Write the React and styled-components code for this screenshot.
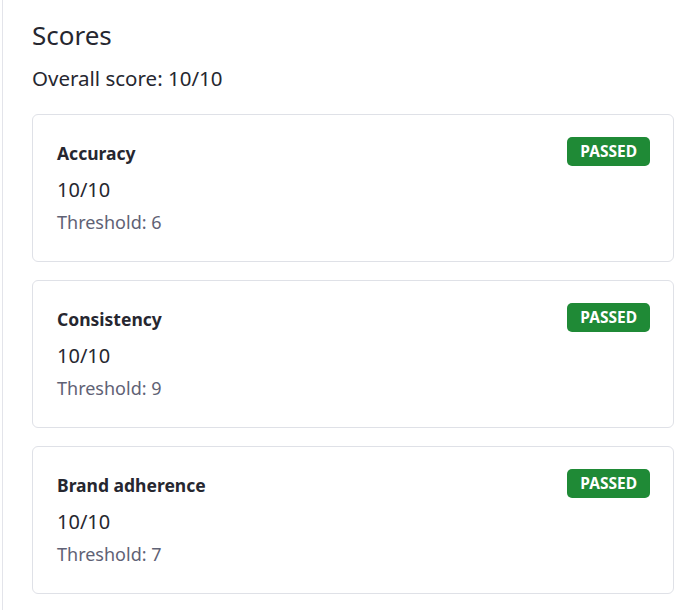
import React from 'react';
import styled, { createGlobalStyle } from 'styled-components';

const scores = [
  { name: 'Accuracy', score: 10, max: 10, threshold: 6 },
  { name: 'Consistency', score: 10, max: 10, threshold: 9 },
  { name: 'Brand adherence', score: 10, max: 10, threshold: 7 },
];

const GlobalStyle = createGlobalStyle`
  html, body {
    margin: 0;
    padding: 0;
    background: #fff;
  }
  body {
    font-family: "Noto Sans", Lato, sans-serif;
    color: #262730;
  }
`;

const Panel = styled.section`
  margin-left: 2px;
  border-left: 1px solid #e3e4ea;
  padding: 17px 26px 16px 29px;
  min-height: 610px;
  box-sizing: border-box;
`;

const Heading = styled.h2`
  margin: 0;
  font-size: 26px;
  font-weight: 400;
  line-height: 36px;
`;

const Overall = styled.p`
  margin: 11px 0 0;
  font-size: 20.5px;
  line-height: 28px;
`;

const List = styled.div`
  display: flex;
  flex-direction: column;
  gap: 18px;
  margin-top: 22px;
`;

const Card = styled.div`
  border: 1px solid #dfe1e7;
  border-radius: 6px;
  padding: 23px 23px 23px 24px;
  display: flex;
  justify-content: space-between;
  align-items: flex-start;
  height: 148px;
  box-sizing: border-box;
`;

const Info = styled.div`
  display: flex;
  flex-direction: column;
  padding-top: 3px;
`;

const Name = styled.div`
  font-size: 17.5px;
  font-weight: 700;
  line-height: 24px;
`;

const Value = styled.div`
  margin-top: 11px;
  font-size: 20px;
  line-height: 28px;
`;

const Threshold = styled.div`
  margin-top: 6px;
  font-size: 18px;
  line-height: 24px;
  color: #5f6275;
`;

const Badge = styled.span`
  flex-shrink: 0;
  margin-top: -1px;
  background: ${(p) => (p.$passed ? '#1f8a36' : '#c9302c')};
  color: #fff;
  font-size: 15.5px;
  font-weight: 700;
  border-radius: 5px;
  height: 29px;
  line-height: 29px;
  padding: 0 13px;
`;

export default function App() {
  return (
    <>
      <GlobalStyle />
      <Panel>
        <Heading>Scores</Heading>
        <Overall>Overall score: 10/10</Overall>
        <List>
          {scores.map((s) => (
            <Card key={s.name}>
              <Info>
                <Name>{s.name}</Name>
                <Value>
                  {s.score}/{s.max}
                </Value>
                <Threshold>Threshold: {s.threshold}</Threshold>
              </Info>
              <Badge $passed={s.score >= s.threshold}>
                {s.score >= s.threshold ? 'PASSED' : 'FAILED'}
              </Badge>
            </Card>
          ))}
        </List>
      </Panel>
    </>
  );
}
